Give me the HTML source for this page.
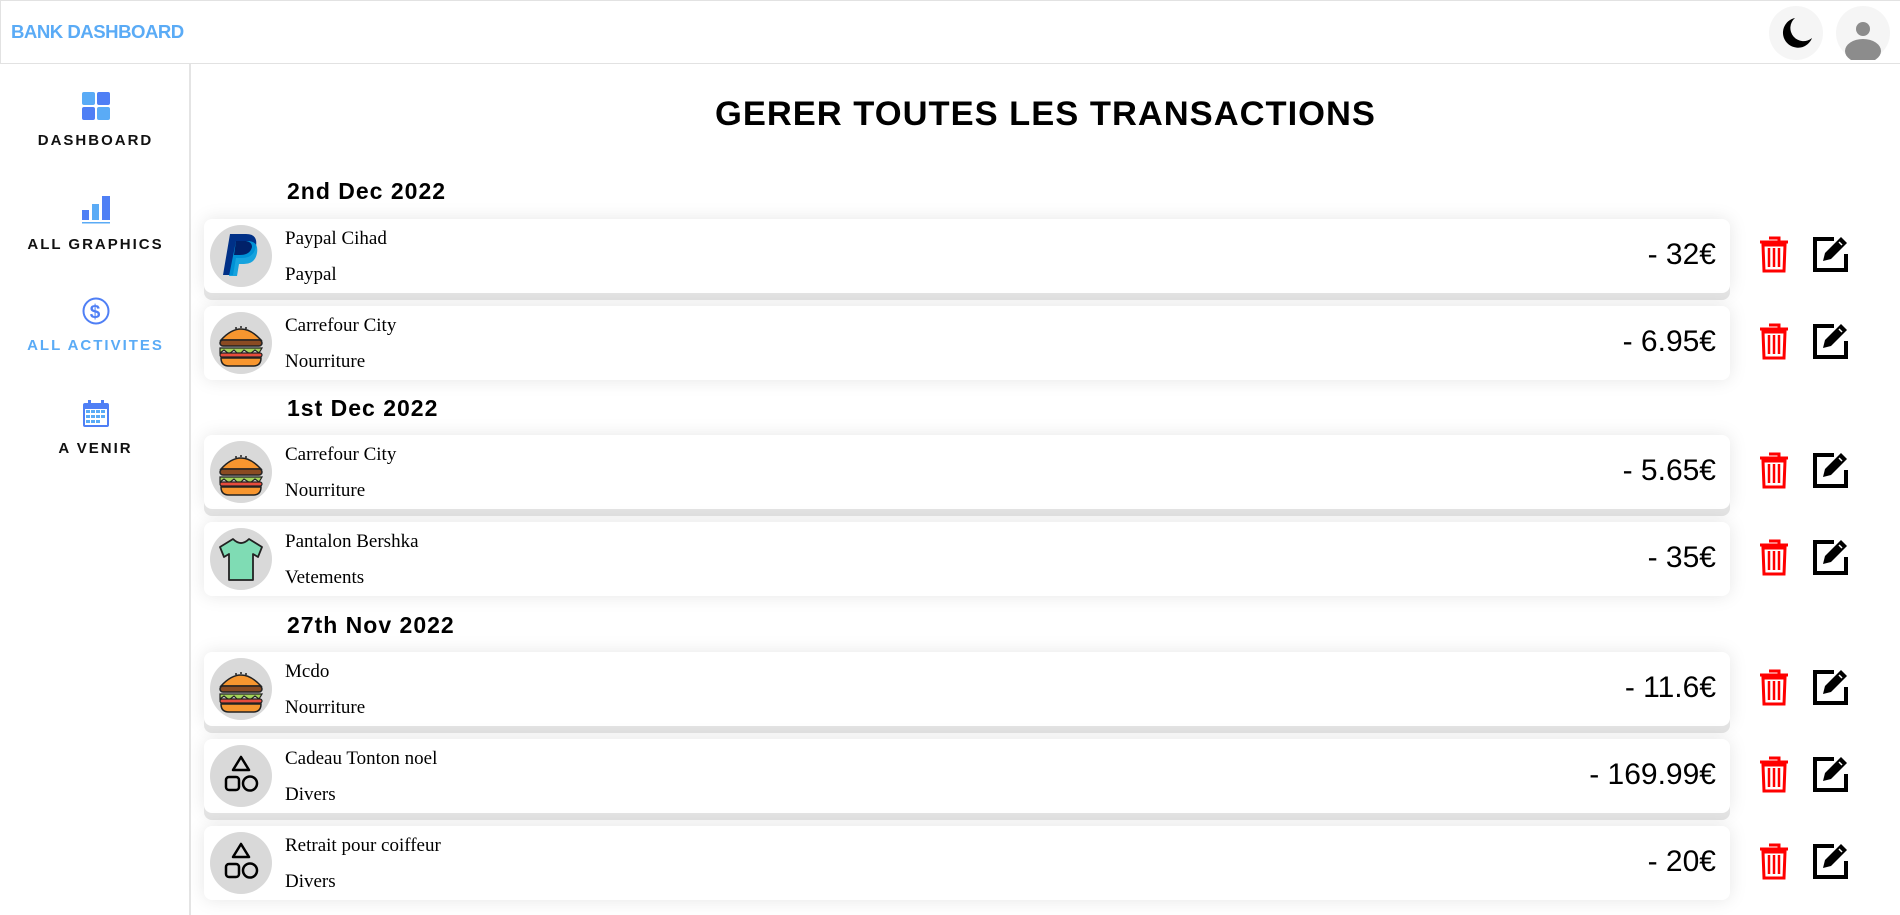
<!DOCTYPE html>
<html><head><meta charset="utf-8"><style>
*{margin:0;padding:0;box-sizing:border-box}
body{width:1900px;height:915px;overflow:hidden;background:#fff;font-family:"Liberation Sans",sans-serif;position:relative}
.hdr{position:absolute;left:0;top:0;width:1900px;height:64px;border:1px solid #e2e2e2;border-right:none}
.logo{position:absolute;left:10px;top:20px;font-size:18.6px;font-weight:bold;color:#5aabf6;letter-spacing:-0.5px}
.circ{position:absolute;top:5px;width:54px;height:54px;border-radius:50%;background:#f5f5f5}
.side{position:absolute;left:0;top:64px;width:191px;height:851px;border-right:2px solid #e4e4e4}
.nav{position:absolute;left:0;width:191px;text-align:center;font-size:15px;font-weight:bold;letter-spacing:2px;color:#111}
.nav svg{display:block;margin:0 auto 12px}
h1{position:absolute;left:191px;width:1709px;top:95px;text-align:center;font-size:34.5px;letter-spacing:1px;font-weight:bold;color:#000}
.date{position:absolute;left:287px;font-size:23px;font-weight:bold;color:#000;letter-spacing:1px}
.card{position:absolute;left:204px;width:1526px;height:74px;background:#fff;border-radius:8px;box-shadow:0 0 18px rgba(0,0,0,.1)}
.card.b{box-shadow:0 7px 0 #e3e3e3,0 0 18px rgba(0,0,0,.1)}
.av{position:absolute;left:6px;top:6px;width:62px;height:62px;border-radius:50%;background:#d9d9d9;overflow:hidden}
.av svg{position:absolute;left:6px;top:6px}
.n{position:absolute;left:81px;top:9px;font-family:"Liberation Serif",serif;font-size:19px;color:#000}
.c{position:absolute;left:81px;top:45px;font-family:"Liberation Serif",serif;font-size:19px;color:#000}
.amt{position:absolute;right:14px;top:19px;font-size:30px;color:#000}
.ic{position:absolute}
</style></head><body>
<div class="hdr"><div class="logo">BANK DASHBOARD</div>
<div class="circ" style="left:1768px"><svg width="54" height="54" viewBox="0 0 54 54"><path d="M26 12 A15 15 0 1 0 43 32 A12 12 0 0 1 26 12Z" fill="#000"/></svg></div>
<div class="circ" style="left:1835px"><svg width="54" height="54" viewBox="0 0 54 54"><circle cx="27" cy="23" r="7" fill="#8c8c8c"/><ellipse cx="27" cy="45" rx="18" ry="12" fill="#8c8c8c"/></svg></div>
</div>
<div class="side">
<div class="nav" style="top:28px"><svg width="28" height="28" viewBox="0 0 28 28"><rect x="0" y="0" width="13" height="13" rx="2" fill="#5aabf6"/><rect x="15" y="0" width="13" height="13" rx="2" fill="#4f7ff5"/><rect x="0" y="15" width="13" height="13" rx="2" fill="#4f7ff5"/><rect x="15" y="15" width="13" height="13" rx="2" fill="#5aabf6"/></svg>DASHBOARD</div>
<div class="nav" style="top:130px"><svg width="28" height="30" viewBox="0 0 28 30"><rect x="0" y="16" width="7" height="10" fill="#4f7ff5"/><rect x="10" y="10" width="7" height="16" fill="#5aabf6"/><rect x="20" y="2" width="8" height="24" fill="#4f7ff5"/><rect x="0" y="28" width="28" height="1.5" fill="#5aabf6"/></svg>ALL GRAPHICS</div>
<div class="nav" style="top:233px;color:#5aabf6"><svg width="28" height="28" viewBox="0 0 28 28"><circle cx="14" cy="14" r="12.5" fill="none" stroke="#4f7ff5" stroke-width="2"/><text x="14" y="21" text-anchor="middle" font-size="19" fill="#4f7ff5" font-family="Liberation Sans">$</text></svg>ALL ACTIVITES</div>
<div class="nav" style="top:336px"><svg width="28" height="28" viewBox="0 0 28 28"><rect x="1" y="3" width="26" height="24" rx="2" fill="#4f7ff5"/><rect x="3" y="9" width="22" height="16" fill="#fff"/><g fill="#5aabf6"><rect x="4" y="10" width="4" height="3"/><rect x="9" y="10" width="4" height="3"/><rect x="14" y="10" width="4" height="3"/><rect x="19" y="10" width="4" height="3"/><rect x="4" y="15" width="4" height="3"/><rect x="9" y="15" width="4" height="3"/><rect x="14" y="15" width="4" height="3"/><rect x="19" y="15" width="4" height="3"/><rect x="4" y="20" width="4" height="3"/><rect x="9" y="20" width="4" height="3"/><rect x="14" y="20" width="4" height="3"/></g><rect x="6" y="0" width="3" height="6" fill="#4f7ff5"/><rect x="19" y="0" width="3" height="6" fill="#4f7ff5"/></svg>A VENIR</div>
</div>
<h1>GERER TOUTES LES TRANSACTIONS</h1>

<div class="date" style="top:178px">2nd Dec 2022</div>
<div class="date" style="top:395px">1st Dec 2022</div>
<div class="date" style="top:612px">27th Nov 2022</div>

<svg width="0" height="0" style="position:absolute"><defs>
<g id="burger"><path d="M5 22 Q25 0 45 22Z" fill="#f7962f" stroke="#222" stroke-width="1.5"/><rect x="4" y="22" width="42" height="6" rx="3" fill="#8a4b22" stroke="#222" stroke-width="1.5"/><path d="M4 30 h42 l-3 5 -4 -3 -5 4 -6 -4 -5 5 -5 -5 -5 4 -5 -4 -4 3z" fill="#a3d35a" stroke="#222" stroke-width="1.2"/><rect x="4" y="35" width="42" height="4" rx="2" fill="#e74c3c" stroke="#222" stroke-width="1.2"/><path d="M5 40 h40 q0 8 -8 8 h-24 q-8 0 -8 -8z" fill="#f7962f" stroke="#222" stroke-width="1.5"/><circle cx="20" cy="10" r="1" fill="#222"/><circle cx="25" cy="9" r="1" fill="#222"/><circle cx="30" cy="10" r="1" fill="#222"/></g>
<g id="shapes"><path d="M25 6 L33 19 H17Z" fill="none" stroke="#000" stroke-width="2.5" stroke-linejoin="round"/><rect x="10" y="26" width="13" height="13" rx="3" fill="none" stroke="#000" stroke-width="2.5"/><circle cx="34" cy="32.5" r="7" fill="none" stroke="#000" stroke-width="2.5"/></g>
<g id="trash"><path d="M11 3 h10 v4 M2 7 h28" fill="none" stroke="#f00" stroke-width="3"/><path d="M5 10 h22 l-1 26 h-20z" fill="none" stroke="#f00" stroke-width="3"/><path d="M11 13 v19 M16 13 v19 M21 13 v19" stroke="#f00" stroke-width="2.5"/></g>
<g id="edit"><path d="M22 3 H3 v31 h31 v-16" fill="none" stroke="#000" stroke-width="4"/><path d="M29 1 l6 6 -16 16 -8 2 2 -8z" fill="#000"/><path d="M27 6 l3 3" stroke="#fff" stroke-width="1.5"/></g>
</defs></svg>

<div class="card b" style="top:219px"><div class="av"><svg width="50" height="50" viewBox="0 0 50 50"><path d="M14 3 h16 q12 0 10 12 q-2 12 -14 12 h-6 l-3 17 h-10z" fill="#003087"/><path d="M20 10 h11 q12 0 10 12 q-2 11 -13 11 h-5 l-2 12 h-8z" fill="#009cde" opacity=".9"/><path d="M20 10 h10 q6 1 6 6 q-2 8 -12 8 h-6z" fill="#012169"/></svg></div><div class="n">Paypal Cihad</div><div class="c">Paypal</div><div class="amt">- 32€</div></div>
<div class="card" style="top:306px"><div class="av"><svg width="50" height="50" viewBox="0 0 50 50"><use href="#burger"/></svg></div><div class="n">Carrefour City</div><div class="c">Nourriture</div><div class="amt">- 6.95€</div></div>
<div class="card b" style="top:435px"><div class="av"><svg width="50" height="50" viewBox="0 0 50 50"><use href="#burger"/></svg></div><div class="n">Carrefour City</div><div class="c">Nourriture</div><div class="amt">- 5.65€</div></div>
<div class="card" style="top:522px"><div class="av"><svg width="50" height="50" viewBox="0 0 50 50"><path d="M17 5 L4 13 l4 10 5 -3 v26 h24 v-26 l5 3 4 -10 -13 -8 q-8 8 -16 0z" fill="#7fdcb4" stroke="#222" stroke-width="1.8" stroke-linejoin="round"/></svg></div><div class="n">Pantalon Bershka</div><div class="c">Vetements</div><div class="amt">- 35€</div></div>
<div class="card b" style="top:652px"><div class="av"><svg width="50" height="50" viewBox="0 0 50 50"><use href="#burger"/></svg></div><div class="n">Mcdo</div><div class="c">Nourriture</div><div class="amt">- 11.6€</div></div>
<div class="card b" style="top:739px"><div class="av"><svg width="50" height="50" viewBox="0 0 50 50"><use href="#shapes"/></svg></div><div class="n">Cadeau Tonton noel</div><div class="c">Divers</div><div class="amt">- 169.99€</div></div>
<div class="card" style="top:826px"><div class="av"><svg width="50" height="50" viewBox="0 0 50 50"><use href="#shapes"/></svg></div><div class="n">Retrait pour coiffeur</div><div class="c">Divers</div><div class="amt">- 20€</div></div>

<svg class="ic" style="left:1758px;top:235px" width="32" height="38" viewBox="0 0 32 38"><use href="#trash"/></svg><svg class="ic" style="left:1812px;top:236px" width="37" height="36" viewBox="0 0 37 36"><use href="#edit"/></svg>
<svg class="ic" style="left:1758px;top:322px" width="32" height="38" viewBox="0 0 32 38"><use href="#trash"/></svg><svg class="ic" style="left:1812px;top:323px" width="37" height="36" viewBox="0 0 37 36"><use href="#edit"/></svg>
<svg class="ic" style="left:1758px;top:451px" width="32" height="38" viewBox="0 0 32 38"><use href="#trash"/></svg><svg class="ic" style="left:1812px;top:452px" width="37" height="36" viewBox="0 0 37 36"><use href="#edit"/></svg>
<svg class="ic" style="left:1758px;top:538px" width="32" height="38" viewBox="0 0 32 38"><use href="#trash"/></svg><svg class="ic" style="left:1812px;top:539px" width="37" height="36" viewBox="0 0 37 36"><use href="#edit"/></svg>
<svg class="ic" style="left:1758px;top:668px" width="32" height="38" viewBox="0 0 32 38"><use href="#trash"/></svg><svg class="ic" style="left:1812px;top:669px" width="37" height="36" viewBox="0 0 37 36"><use href="#edit"/></svg>
<svg class="ic" style="left:1758px;top:755px" width="32" height="38" viewBox="0 0 32 38"><use href="#trash"/></svg><svg class="ic" style="left:1812px;top:756px" width="37" height="36" viewBox="0 0 37 36"><use href="#edit"/></svg>
<svg class="ic" style="left:1758px;top:842px" width="32" height="38" viewBox="0 0 32 38"><use href="#trash"/></svg><svg class="ic" style="left:1812px;top:843px" width="37" height="36" viewBox="0 0 37 36"><use href="#edit"/></svg>
</body></html>
